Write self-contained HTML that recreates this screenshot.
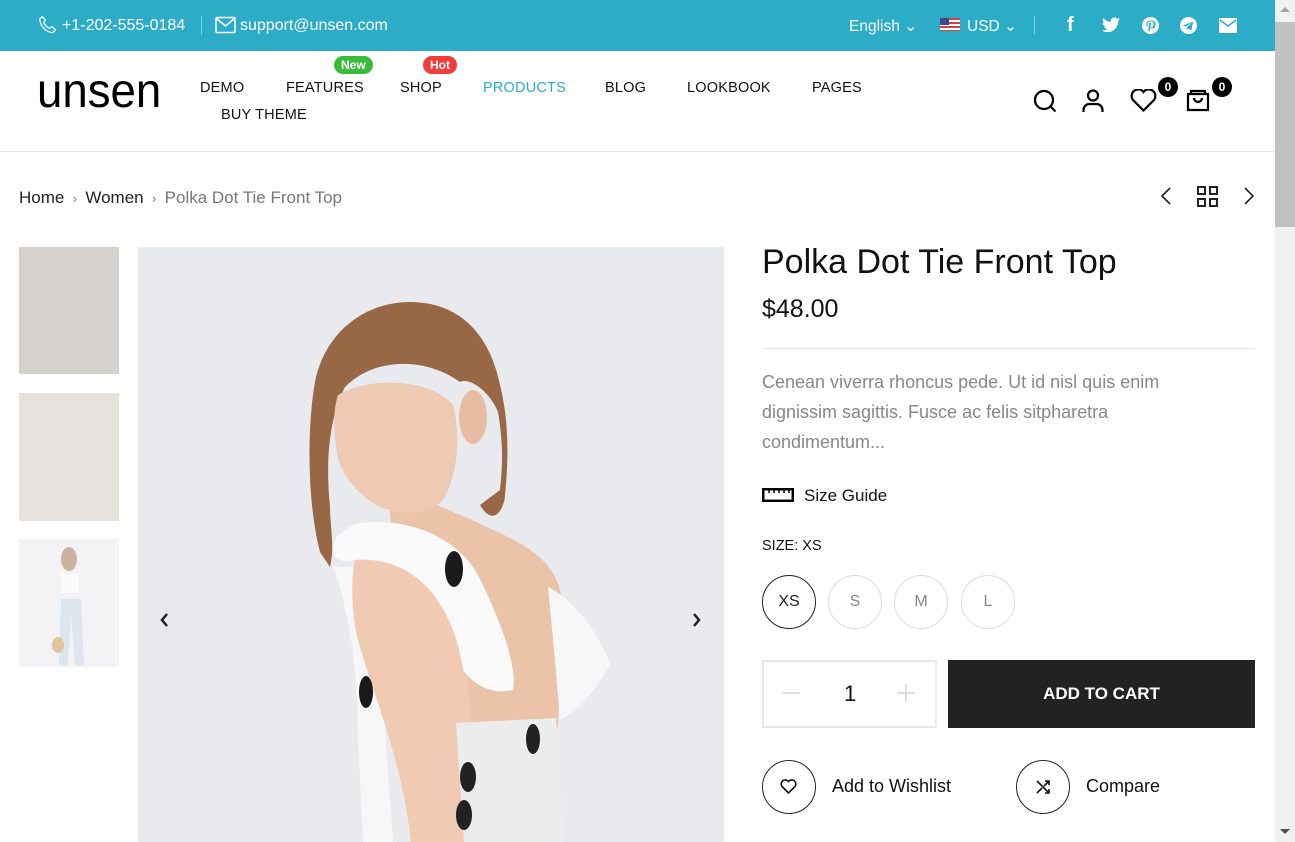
<!DOCTYPE html>
<html><head><meta charset="utf-8"><style>
*{margin:0;padding:0;box-sizing:border-box}
body{width:1295px;height:842px;overflow:hidden;background:#fff;font-family:"Liberation Sans",sans-serif;color:#111;position:relative}
.a{position:absolute}
.top{left:0;top:0;width:1275px;height:51px;background:#2cacc6;color:#fff;font-size:16px}
.nav{font-size:14.5px;color:#111;letter-spacing:.2px}
.badge{font-size:12px;color:#fff;border-radius:10px;padding:2px 7px;font-weight:bold}
.cnt{width:20px;height:20px;border-radius:50%;background:#000;color:#fff;font-size:12px;font-weight:bold;text-align:center;line-height:20px}
.sz{width:54px;height:54px;border-radius:50%;border:1px solid #ddd;text-align:center;line-height:52px;font-size:16px;color:#888}
.scroll{left:1275px;top:0;width:20px;height:842px;background:#f1f1f1}
</style></head><body>
<div class="a top">
  <svg class="a" style="left:38px;top:15px" width="20" height="20" viewBox="0 0 24 24" fill="none" stroke="#fff" stroke-width="1.5"><path d="M5 2l4 4-2 3c1 3 4 6 7 7l3-2 4 4-3 3C10 21 3 14 2 5z"/></svg>
  <span class="a" style="left:62px;top:17px">+1-202-555-0184</span>
  <div class="a" style="left:201px;top:16px;width:1px;height:19px;background:#7fcfe0"></div>
  <svg class="a" style="left:215px;top:16px" width="21" height="18" viewBox="0 0 21 18" fill="none" stroke="#fff" stroke-width="1.5"><rect x="1" y="1.5" width="19" height="15" rx="1"/><path d="M1 2l9.5 8 9.5-8"/></svg>
  <span class="a" style="left:240px;top:17px">support@unsen.com</span>
  <span class="a" style="left:849px;top:17px;font-size:15.5px">English ⌄</span>
  <div class="a" style="left:940px;top:18px;width:20px;height:13px;background:repeating-linear-gradient(#c44 0 2px,#fff 2px 4px)"><div style="width:9px;height:7px;background:#3c4a8c"></div></div>
  <span class="a" style="left:967px;top:17px;font-size:15.5px">USD ⌄</span>
  <div class="a" style="left:1034px;top:16px;width:1px;height:19px;background:#7fcfe0"></div>
  <span class="a" style="left:1067px;top:14px;font-size:20px;font-weight:bold">f</span>
  <svg class="a" style="left:1102px;top:17px" width="18" height="16" viewBox="0 0 24 20" fill="#fff"><path d="M24 2.4a10 10 0 01-2.8.8A5 5 0 0023.3.4a10 10 0 01-3.1 1.2A4.9 4.9 0 0011.8 6 14 14 0 011.7.9a4.9 4.9 0 001.5 6.6A5 5 0 01.9 6.9 4.9 4.9 0 004.9 11.8a5 5 0 01-2.200.1 4.9 4.9 0 004.6 3.4A9.9 9.9 0 010 17.3 14 14 0 007.5 19.5c9.1 0 14-7.5 14-14v-.6A10 10 0 0024 2.4z"/></svg>
  <svg class="a" style="left:1142px;top:17px" width="17" height="17" viewBox="0 0 24 24"><circle cx="12" cy="12" r="12" fill="#fff"/><path d="M12.5 5C8 5 6 8 6 10.5c0 1.5.6 2.8 1.8 3.3l.5-1.2c-.4-.5-.6-1-.6-1.900 0-2.4 1.8-4.6 4.7-4.6 2.6 0 4 1.6 4 3.7 0 2.8-1.2 5.1-3 5.1-1 0-1.8-.8-1.5-1.900.3-1.2.9-2.6.9-3.500 0-2-2.9-1.8-2.9.9l.3 1.3-1.2 5.2c-.3 1.4 0 3.3 0 3.5l1 .1c.3-.5 1.2-2 1.5-3.2l.6-2.3c.3.6 1.2 1.1 2.2 1.1 3 0 5-2.7 5-6.3C19.3 7.6 16.9 5 12.5 5z" fill="#2cacc6"/></svg>
  <svg class="a" style="left:1180px;top:17px" width="17" height="17" viewBox="0 0 24 24"><circle cx="12" cy="12" r="12" fill="#fff"/><path d="M5 11.7l12.5-4.8c.6-.2 1 .1.9.9l-2.1 10c-.2.7-.6.9-1.2.6l-3.2-2.4-1.6 1.5c-.2.2-.3.3-.7.3l.2-3.3 6-5.4c.3-.2-.1-.4-.4-.2l-7.4 4.7-3.2-1c-.7-.2-.7-.7.2-1z" fill="#2cacc6"/></svg>
  <svg class="a" style="left:1219px;top:18px" width="18" height="15" viewBox="0 0 18 15"><rect width="18" height="15" rx="1.5" fill="#fff"/><path d="M1 2l8 6 8-6" fill="none" stroke="#2cacc6" stroke-width="1.5"/></svg>
</div>
<div class="a scroll"><div class="a" style="left:0;top:22px;width:20px;height:205px;background:#c1c1c1"></div><div class="a" style="left:5px;top:7px;width:0;height:0;border-left:5px solid transparent;border-right:5px solid transparent;border-bottom:5px solid #a3a3a3"></div><div class="a" style="left:5px;top:829px;width:0;height:0;border-left:5px solid transparent;border-right:5px solid transparent;border-top:5px solid #505050"></div></div>

<span class="a" style="left:37px;top:64px;font-size:48px;line-height:56px;color:#000;transform:scaleX(0.95);transform-origin:left">unsen</span>
<span class="a nav" style="left:200px;top:80px">DEMO</span>
<span class="a nav" style="left:286px;top:80px">FEATURES</span>
<span class="a badge" style="left:334px;top:56px;background:#3bbb3b">New</span>
<span class="a nav" style="left:400px;top:80px">SHOP</span>
<span class="a badge" style="left:423px;top:56px;background:#f23c3c">Hot</span>
<span class="a nav" style="left:483px;top:80px;color:#2cacc6">PRODUCTS</span>
<span class="a nav" style="left:605px;top:80px">BLOG</span>
<span class="a nav" style="left:687px;top:80px">LOOKBOOK</span>
<span class="a nav" style="left:812px;top:80px">PAGES</span>
<span class="a nav" style="left:221px;top:107px">BUY THEME</span>
<svg class="a" style="left:1033px;top:89px" width="25" height="25" viewBox="0 0 25 25" fill="none" stroke="#000" stroke-width="2.2"><circle cx="11" cy="11" r="9"/><path d="M17.5 17.5l5 5"/></svg>
<svg class="a" style="left:1082px;top:89px" width="22" height="24" viewBox="0 0 22 24" fill="none" stroke="#000" stroke-width="2.2"><circle cx="11" cy="6.5" r="5"/><path d="M1.5 23v-2a6 6 0 016-6h7a6 6 0 016 6v2"/></svg>
<svg class="a" style="left:1130px;top:89px" width="27" height="23" viewBox="0 0 27 23" fill="none" stroke="#000" stroke-width="2.2"><path d="M13.5 21.5L3 11A6 6 0 0113.5 3a6 6 0 0110.5 8z"/></svg>
<div class="a cnt" style="left:1158px;top:77px">0</div>
<svg class="a" style="left:1186px;top:88px" width="24" height="24" viewBox="0 0 24 24" fill="none" stroke="#000" stroke-width="2.2"><path d="M5 6V3h14v3M2 6h20v16H2zM8 10a4 4 0 008 0"/></svg>
<div class="a cnt" style="left:1212px;top:77px">0</div>
<div class="a" style="left:0;top:151px;width:1275px;height:1px;background:#e5e5e5"></div>

<div class="a" style="left:19px;top:188px;font-size:17px;color:#222">Home <span style="color:#777;font-size:13px">&nbsp;›&nbsp;</span> Women <span style="color:#777;font-size:13px">&nbsp;›&nbsp;</span> <span style="color:#777">Polka Dot Tie Front Top</span></div>
<svg class="a" style="left:1160px;top:187px" width="12" height="18" viewBox="0 0 12 18" fill="none" stroke="#222" stroke-width="1.6"><path d="M10 1L2 9l8 8"/></svg>
<svg class="a" style="left:1197px;top:186px" width="21" height="21" viewBox="0 0 21 21" fill="none" stroke="#222" stroke-width="2"><rect x="1" y="1" width="7" height="7"/><rect x="13" y="1" width="7" height="7"/><rect x="1" y="13" width="7" height="7"/><rect x="13" y="13" width="7" height="7"/></svg>
<svg class="a" style="left:1243px;top:187px" width="12" height="18" viewBox="0 0 12 18" fill="none" stroke="#222" stroke-width="1.6"><path d="M2 1l8 8-8 8"/></svg>

<div class="a" style="left:19px;top:247px;width:100px;height:127px;background:#d5d1ce"></div>
<div class="a" style="left:19px;top:393px;width:100px;height:128px;background:#e6e2de"></div>
<svg class="a" style="left:19px;top:539px" width="100" height="128" viewBox="0 0 100 128"><rect width="100" height="128" fill="#f3f3f5"/><ellipse cx="50" cy="20" rx="8" ry="12" fill="#cbb3a0"/><rect x="42" y="34" width="18" height="20" fill="#fafafa"/><path d="M42 60h20l3 66h-9l-4-50-3 50h-9z" fill="#dde5ee"/><ellipse cx="39" cy="106" rx="6" ry="8" fill="#e3c59c"/></svg>

<svg class="a" style="left:138px;top:247px" width="586" height="595" viewBox="0 0 586 595">
<rect width="586" height="595" fill="#e9eaee"/>
<!-- back/neck skin -->
<path d="M250 240c30 10 80 30 120 50 40 20 55 40 55 80l-5 110-110 10-50-120z" fill="#ebc3a9"/>
<!-- hair -->
<path d="M272 55c-45 0-85 30-95 80-8 45-8 120 5 170l10 15c5-20 0-40 0-60-5-50 0-90 15-120 30-30 80-30 115-5 10-5 30 10 38 30 5 30 5 50 2 78l-20 15c15 25 25 0 25-10 3-30 5-70-5-110-10-50-40-83-90-83z" fill="#986846"/>
<!-- face -->
<path d="M200 148c35-20 95-15 115 10 8 30 5 70-10 95-15 15-40 15-60 8-20-8-40-30-45-50-5-25-5-48 0-63z" fill="#efcab3"/>
<ellipse cx="335" cy="170" rx="14" ry="27" fill="#e6bca3"/>
<!-- left front white top -->
<path d="M195 320c15 40 25 100 25 170l5 105h30l-10-140c-5-50-15-100-30-135z" fill="#f7f7f7"/>
<!-- arm -->
<path d="M218 310c30-15 80-10 95 20 15 60 25 170 25 265h-65c-10-90-40-150-55-210-5-30-5-60 0-75z" fill="#f0cab3"/>
<!-- left ruffle -->
<path d="M215 278c40-10 100 5 125 50 20 40 40 90 35 115-20 5-40-5-50-20 -10-70-50-115-110-110 -20 5-25-10-15-25z" fill="#fafafa"/>
<!-- right ruffle -->
<path d="M410 340c20 10 50 40 62 78-15 25-30 45-50 55l-5-60z" fill="#f7f7f7"/>
<!-- corset -->
<path d="M318 476l100-5 8 124h-100z" fill="#ececec"/>
<ellipse cx="316" cy="322" rx="9" ry="18" fill="#1a1a1a"/>
<ellipse cx="228" cy="445" rx="7" ry="16" fill="#1a1a1a"/>
<ellipse cx="330" cy="530" rx="8" ry="15" fill="#222"/>
<ellipse cx="395" cy="492" rx="7" ry="15" fill="#222"/>
<ellipse cx="326" cy="568" rx="8" ry="15" fill="#222"/>
<path d="M29 367l-5 6 5 6" fill="none" stroke="#222" stroke-width="2.5"/>
<path d="M556 367l5 6-5 6" fill="none" stroke="#222" stroke-width="2.5"/>
</svg>

<div class="a" style="left:762px;top:243px;font-size:34px;color:#111">Polka Dot Tie Front Top</div>
<div class="a" style="left:762px;top:295px;font-size:25px;color:#111">$48.00</div>
<div class="a" style="left:762px;top:348px;width:493px;height:1px;background:#e5e5e5"></div>
<div class="a" style="left:762px;top:367px;width:420px;font-size:18px;line-height:30px;color:#888">Cenean viverra rhoncus pede. Ut id nisl quis enim dignissim sagittis. Fusce ac felis sitpharetra condimentum...</div>
<svg class="a" style="left:762px;top:488px" width="32" height="14" viewBox="0 0 32 14" fill="none" stroke="#000" stroke-width="2.5"><rect x="1.2" y="1.2" width="29.6" height="11.6"/><path d="M7 1v4M12 1v4M17 1v4M22 1v4M27 1v4" stroke-width="1.5"/></svg>
<div class="a" style="left:804px;top:486px;font-size:17px">Size Guide</div>
<div class="a" style="left:762px;top:538px;font-size:14.5px">SIZE: XS</div>
<div class="a sz" style="left:762px;top:575px;border-color:#222;color:#222">XS</div>
<div class="a sz" style="left:828px;top:575px">S</div>
<div class="a sz" style="left:894px;top:575px">M</div>
<div class="a sz" style="left:961px;top:575px">L</div>
<div class="a" style="left:762px;top:660px;width:175px;height:68px;border:2px solid #e9e9e9"></div>
<div class="a" style="left:782px;top:692px;width:18px;height:2px;background:#ddd"></div>
<div class="a" style="left:844px;top:681px;font-size:22px">1</div>
<div class="a" style="left:897px;top:692px;width:18px;height:2px;background:#ddd"></div><div class="a" style="left:905px;top:684px;width:2px;height:18px;background:#ddd"></div>
<div class="a" style="left:948px;top:660px;width:307px;height:68px;background:#222;color:#fff;font-weight:bold;font-size:17px;text-align:center;line-height:68px">ADD TO CART</div>
<div class="a" style="left:762px;top:760px;width:54px;height:54px;border-radius:50%;border:1px solid #222"></div>
<svg class="a" style="left:780px;top:779px" width="17" height="15" viewBox="0 0 17 15" fill="none" stroke="#111" stroke-width="1.6"><path d="M8.5 14L2 7.5A3.8 3.8 0 018.5 2.5a3.8 3.8 0 016.5 5z"/></svg>
<div class="a" style="left:832px;top:776px;font-size:18px">Add to Wishlist</div>
<div class="a" style="left:1016px;top:760px;width:54px;height:54px;border-radius:50%;border:1px solid #222"></div>
<svg class="a" style="left:1035px;top:779px" width="16" height="16" viewBox="0 0 16 16" fill="none" stroke="#111" stroke-width="1.6"><path d="M2 2l12 12M10 2h4v4M14 2L9 7M7 9l-5 5M10 14h4v-4"/></svg>
<div class="a" style="left:1086px;top:776px;font-size:18px">Compare</div>
</body></html>
